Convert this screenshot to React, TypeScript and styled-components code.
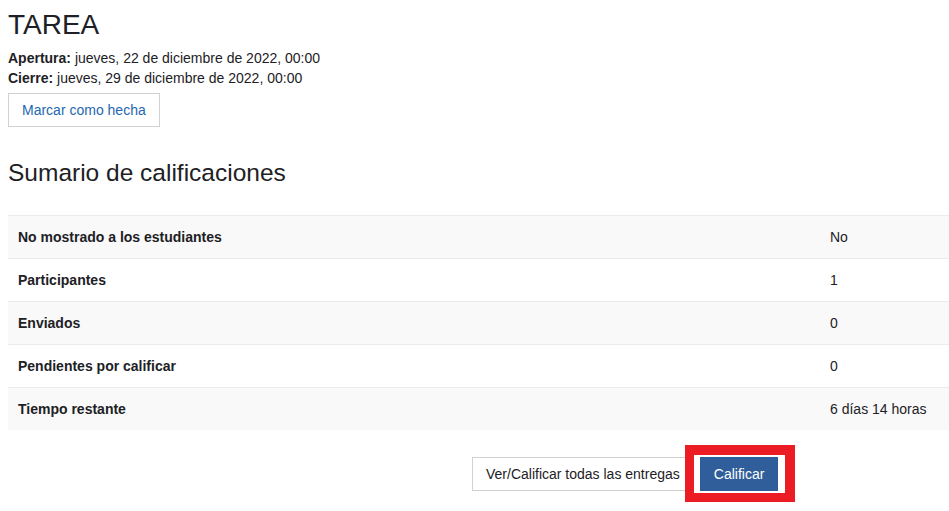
import styled, { createGlobalStyle } from "styled-components";

const GlobalStyle = createGlobalStyle`
  html, body {
    margin: 0;
    padding: 0;
    background: #ffffff;
  }
  body {
    font-family: "Liberation Sans", Arial, sans-serif;
    font-size: 14px;
    line-height: 20px;
    color: #1d2125;
  }
`;

const Page = styled.div`
  padding: 8px 0 20px 8px;
  width: 949px;
  min-height: 511px;
  box-sizing: border-box;
`;

const Title = styled.h2`
  margin: 0 0 6px;
  font-size: 28px;
  line-height: 34px;
  font-weight: 400;
  color: #1d2125;
`;

const DateLine = styled.div`
  line-height: 20px;
  b {
    font-weight: 700;
  }
`;

const Button = styled.button<{ $primary?: boolean; $link?: boolean }>`
  font-family: inherit;
  font-size: 14px;
  line-height: 20px;
  height: 34px;
  padding: 0 13px;
  border: 1px solid ${(p) => (p.$primary ? "#2d5d98" : "#cfd1d3")};
  background: ${(p) => (p.$primary ? "#2f5e9a" : "#ffffff")};
  color: ${(p) => (p.$primary ? "#ffffff" : p.$link ? "#2567b0" : "#1d2125")};
  border-radius: 0;
  cursor: pointer;
`;

const MarkButton = styled(Button)`
  margin-top: 5px;
`;

// red annotation frame drawn over the "Calificar" button
const Highlight = styled.span`
  position: relative;
  display: inline-flex;
  &::after {
    content: "";
    position: absolute;
    top: -12px;
    left: -15px;
    right: -17px;
    bottom: -11px;
    border-style: solid;
    border-color: #ec1c24;
    border-width: 10px 10px 9px 9px;
    pointer-events: none;
  }
`;

const SectionTitle = styled.h3`
  margin: 31px 0 28px;
  font-size: 24.5px;
  line-height: 29px;
  font-weight: 400;
  color: #1d2125;
`;

const Table = styled.div`
  display: grid;
  grid-template-columns: 812px 1fr;
`;

const Row = styled.div<{ $striped: boolean }>`
  display: contents;
  & > div {
    background: ${(p) => (p.$striped ? "#f9f9f9" : "#ffffff")};
    border-top: 1px solid #ebebeb;
    padding: 11px 10px;
    line-height: 20px;
  }
`;

const Label = styled.div`
  font-weight: 700;
`;

const Value = styled.div``;

const Actions = styled.div`
  display: flex;
  gap: 6px;
  margin: 27px 0 0 464px;
`;

const rows: [string, string][] = [
  ["No mostrado a los estudiantes", "No"],
  ["Participantes", "1"],
  ["Enviados", "0"],
  ["Pendientes por calificar", "0"],
  ["Tiempo restante", "6 días 14 horas"],
];

export default function App() {
  return (
    <>
      <GlobalStyle />
      <Page>
        <Title>TAREA</Title>
        <DateLine>
          <b>Apertura:</b> jueves, 22 de diciembre de 2022, 00:00
        </DateLine>
        <DateLine>
          <b>Cierre:</b> jueves, 29 de diciembre de 2022, 00:00
        </DateLine>
        <MarkButton $link>Marcar como hecha</MarkButton>
        <SectionTitle>Sumario de calificaciones</SectionTitle>
        <Table>
          {rows.map(([label, value], i) => (
            <Row key={label} $striped={i % 2 === 0}>
              <Label>{label}</Label>
              <Value>{value}</Value>
            </Row>
          ))}
        </Table>
        <Actions>
          <Button>Ver/Calificar todas las entregas</Button>
          <Highlight>
            <Button $primary>Calificar</Button>
          </Highlight>
        </Actions>
      </Page>
    </>
  );
}
